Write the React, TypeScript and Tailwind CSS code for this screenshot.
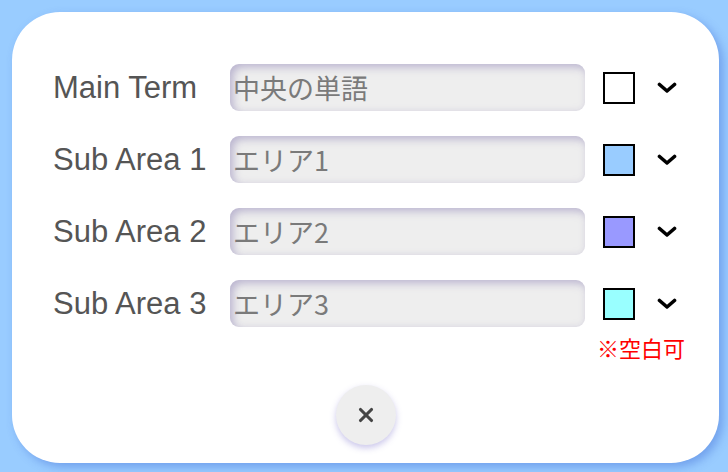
import { X } from 'lucide-react';

const rows = [
  { label: 'Main Term', placeholder: '中央の単語', color: 'bg-[#ffffff]' },
  { label: 'Sub Area 1', placeholder: 'エリア1', color: 'bg-[#99ccff]' },
  { label: 'Sub Area 2', placeholder: 'エリア2', color: 'bg-[#9999ff]' },
  { label: 'Sub Area 3', placeholder: 'エリア3', color: 'bg-[#99ffff]' },
];

function Chevron() {
  return (
    <svg width="20" height="12" viewBox="0 0 20 12" className="block">
      <polyline
        points="2.5,2.5 10,9 17.5,2.5"
        fill="none"
        stroke="#000"
        strokeWidth="3.6"
        strokeLinecap="round"
        strokeLinejoin="round"
      />
    </svg>
  );
}

export default function App() {
  return (
    <div className="w-[728px] h-[472px] bg-[#99ccff] p-3 overflow-hidden">
      <div className="w-[707px] h-[451px] bg-white rounded-[48px] shadow-[4px_4px_10px_rgba(40,80,200,0.35)] pt-[52px] pl-[41px] flex flex-col">
        {/* Term rows */}
        <div className="flex flex-col gap-[25px]">
          {rows.map((row) => (
            <div key={row.label} className="flex items-center h-[47px]">
              <div className="w-[177px] text-[31px] leading-none text-[#555] font-['Liberation_Sans',sans-serif]">
                {row.label}
              </div>
              <div className="w-[355px] h-[47px] rounded-[9px] bg-[#eeeeee] shadow-[inset_3px_3px_8px_rgba(140,130,180,0.55)] flex items-center pl-[3px]">
                <span className="text-[27px] text-[#7a7a7a] font-['Noto_Sans_CJK_JP',sans-serif] leading-none">
                  {row.placeholder}
                </span>
              </div>
              <div className={`ml-[18px] w-[32px] h-[32px] border-2 border-black ${row.color}`} />
              <div className="ml-[22px]">
                <Chevron />
              </div>
            </div>
          ))}
        </div>

        <div className="self-start ml-[544px] mt-[9px] text-[22px] leading-none text-[#ff0000] font-['Noto_Sans_CJK_JP',sans-serif]">
          ※空白可
        </div>

        {/* Close button */}
        <div className="flex justify-center pr-[41px] mt-[27px]">
          <button className="w-[60px] h-[60px] rounded-full bg-[#eeeeee] shadow-[0_3px_6px_rgba(140,130,210,0.45)] flex items-center justify-center">
            <X size={22} strokeWidth={3.4} color="#444" />
          </button>
        </div>
      </div>
    </div>
  );
}
